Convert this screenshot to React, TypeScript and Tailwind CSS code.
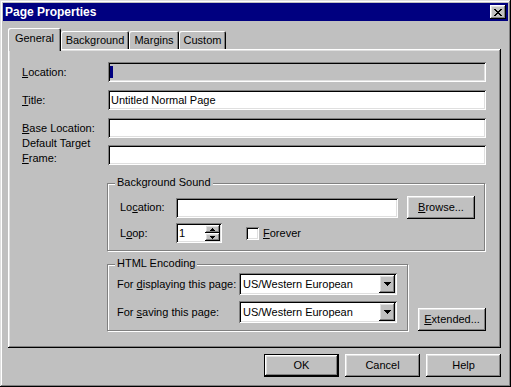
import React from "react";

const raised =
  "shadow-[inset_-1px_-1px_#000,inset_1px_1px_#fff,inset_-2px_-2px_#808080,inset_2px_2px_#dfdfdf]";
const sunken =
  "shadow-[inset_1px_1px_#808080,inset_-1px_-1px_#fff,inset_2px_2px_#000,inset_-2px_-2px_#dfdfdf]";
const etched = "border border-[#808080] shadow-[inset_1px_1px_#fff,1px_1px_#fff]";

function CloseGlyph() {
  const rows = ["XX....XX", ".XX..XX.", "..XXXX..", "...XX...", "..XXXX..", ".XX..XX.", "XX....XX"];
  return (
    <svg width="8" height="7" shapeRendering="crispEdges">
      {rows.flatMap((r, y) =>
        r.split("").map((c, x) => (c === "X" ? <rect key={`${x}-${y}`} x={x} y={y} width="1" height="1" fill="#000" /> : null))
      )}
    </svg>
  );
}

function DownArrow() {
  return (
    <svg width="7" height="4" shapeRendering="crispEdges">
      <rect x="0" y="0" width="7" height="1" fill="#000" />
      <rect x="1" y="1" width="5" height="1" fill="#000" />
      <rect x="2" y="2" width="3" height="1" fill="#000" />
      <rect x="3" y="3" width="1" height="1" fill="#000" />
    </svg>
  );
}

function SmallArrow({ up }: { up?: boolean }) {
  return (
    <svg width="5" height="3" shapeRendering="crispEdges">
      {up ? (
        <>
          <rect x="2" y="0" width="1" height="1" fill="#000" />
          <rect x="1" y="1" width="3" height="1" fill="#000" />
          <rect x="0" y="2" width="5" height="1" fill="#000" />
        </>
      ) : (
        <>
          <rect x="0" y="0" width="5" height="1" fill="#000" />
          <rect x="1" y="1" width="3" height="1" fill="#000" />
          <rect x="2" y="2" width="1" height="1" fill="#000" />
        </>
      )}
    </svg>
  );
}

function Tab({ label, width, selected }: { label: string; width: string; selected?: boolean }) {
  if (selected) {
    return (
      <div
        className={`${width} h-[23px] -mb-[2px] relative z-10 bg-[#c0c0c0] pt-[4px] text-center rounded-t-[2px] shadow-[inset_1px_1px_#fff,inset_-1px_0_#000,inset_-2px_0_#808080]`}
      >
        {label}
      </div>
    );
  }
  return (
    <div
      className={`${width} h-[18px] pt-[3px] text-center rounded-t-[2px] shadow-[inset_1px_1px_#fff,inset_-1px_0_#000,inset_-2px_0_#808080]`}
    >
      {label}
    </div>
  );
}

function Select({ value }: { value: string }) {
  return (
    <div className={`w-[158px] h-[22px] bg-white p-[2px] flex items-center ${sunken}`}>
      <span className="flex-1 pl-[2px]">{value}</span>
      <div className={`w-[16px] h-[18px] bg-[#c0c0c0] flex items-center justify-center ${raised}`}>
        <DownArrow />
      </div>
    </div>
  );
}

export default function App() {
  return (
    <div
      className={`w-[511px] h-[387px] bg-[#c0c0c0] p-[3px] flex flex-col font-['Liberation_Sans',Arial,sans-serif] text-[11px] leading-[13px] text-black shadow-[inset_-1px_-1px_#000,inset_1px_1px_#dfdfdf,inset_-2px_-2px_#808080,inset_2px_2px_#fff]`}
    >
      {/* Title bar */}
      <div className="h-[18px] bg-[#000080] flex items-center justify-between pl-[2px] pr-[2px]">
        <span className="text-white font-bold text-[12px]">Page Properties</span>
        <div className={`w-[16px] h-[14px] bg-[#c0c0c0] flex items-center justify-center ${raised}`}>
          <CloseGlyph />
        </div>
      </div>

      <div className="ml-[5px] mr-[7px] flex flex-col">
        {/* Tabs */}
        <div className="mt-[7px] h-[21px] flex items-end">
          <Tab label="General" width="w-[53px]" selected />
          <Tab label="Background" width="w-[68px]" />
          <Tab label="Margins" width="w-[50px]" />
          <Tab label="Custom" width="w-[47px]" />
        </div>

        {/* Panel */}
        <div
          className={`h-[299px] pt-[13px] pl-[14px] pr-[15px] flex flex-col shadow-[inset_-1px_-1px_#000,inset_1px_1px_#fff,inset_-2px_-2px_#808080,inset_2px_2px_#dfdfdf]`}
        >
          <div className="flex items-center h-[20px]">
            <div className="w-[86px]">
              <span className="underline">L</span>ocation:
            </div>
            <div className={`flex-1 h-[20px] bg-[#c0c0c0] flex items-center pl-[2px] ${sunken}`}>
              <div className="w-[3px] h-[12px] bg-[#000080]" />
            </div>
          </div>

          <div className="flex items-center h-[20px] mt-[8px]">
            <div className="w-[86px]">
              <span className="underline">T</span>itle:
            </div>
            <div className={`flex-1 h-[20px] bg-white flex items-center pl-[3px] ${sunken}`}>Untitled Normal Page</div>
          </div>

          <div className="flex items-center h-[20px] mt-[8px]">
            <div className="w-[86px]">
              <span className="underline">B</span>ase Location:
            </div>
            <div className={`flex-1 h-[20px] bg-white ${sunken}`} />
          </div>

          <div className="flex items-start h-[20px] mt-[7px]">
            <div className="w-[86px] -mt-[9px] leading-[15px]">
              Default Target
              <br />
              <span className="underline">F</span>rame:
            </div>
            <div className={`flex-1 h-[20px] bg-white ${sunken}`} />
          </div>

          {/* Background Sound */}
          <div className={`relative mt-[18px] ml-[85px] w-[378px] h-[68px] pt-[12px] pl-[12px] flex flex-col ${etched}`}>
            <div className="absolute -top-[8px] left-[7px] px-[2px] bg-[#c0c0c0]">Background Sound</div>
            <div className="flex items-center h-[23px]">
              <div className="w-[56px]">
                Lo<span className="underline">c</span>ation:
              </div>
              <div className={`w-[222px] h-[20px] bg-white ${sunken}`} />
              <div className={`ml-[9px] w-[68px] h-[23px] flex items-center justify-center ${raised}`}>
                <span>
                  <span className="underline">B</span>rowse...
                </span>
              </div>
            </div>
            <div className="flex items-center h-[20px] mt-[4px]">
              <div className="w-[56px]">
                L<span className="underline">o</span>op:
              </div>
              <div className={`w-[46px] h-[20px] bg-white p-[2px] flex ${sunken}`}>
                <span className="flex-1 pl-[1px] leading-[16px]">1</span>
                <div className="w-[15px] flex flex-col">
                  <div className={`h-[8px] bg-[#c0c0c0] flex items-center justify-center ${raised}`}>
                    <SmallArrow up />
                  </div>
                  <div className={`h-[8px] bg-[#c0c0c0] flex items-center justify-center ${raised}`}>
                    <SmallArrow />
                  </div>
                </div>
              </div>
              <div className={`ml-[24px] w-[13px] h-[13px] bg-white ${sunken}`} />
              <div className="ml-[4px]">
                <span className="underline">F</span>orever
              </div>
            </div>
          </div>

          {/* HTML Encoding + Extended */}
          <div className="mt-[13px] ml-[85px] flex items-end">
            <div className={`relative w-[302px] h-[67px] pt-[8px] pl-[9px] flex flex-col ${etched}`}>
              <div className="absolute -top-[8px] left-[7px] px-[2px] bg-[#c0c0c0]">HTML Encoding</div>
              <div className="flex items-center h-[22px]">
                <div className="w-[122px]">
                  For <span className="underline">d</span>isplaying this page:
                </div>
                <Select value="US/Western European" />
              </div>
              <div className="flex items-center h-[22px] mt-[6px]">
                <div className="w-[122px]">
                  For <span className="underline">s</span>aving this page:
                </div>
                <Select value="US/Western European" />
              </div>
            </div>
            <div className={`ml-[10px] w-[68px] h-[23px] flex items-center justify-center ${raised}`}>
              <span>
                <span className="underline">E</span>xtended...
              </span>
            </div>
          </div>
        </div>

        {/* Dialog buttons */}
        <div className="mt-[6px] flex justify-end gap-[6px]">
          <div className={`w-[75px] h-[23px] border border-black flex items-center justify-center ${raised}`}>OK</div>
          <div className={`w-[75px] h-[23px] flex items-center justify-center ${raised}`}>Cancel</div>
          <div className={`w-[75px] h-[23px] flex items-center justify-center ${raised}`}>Help</div>
        </div>
      </div>
    </div>
  );
}
